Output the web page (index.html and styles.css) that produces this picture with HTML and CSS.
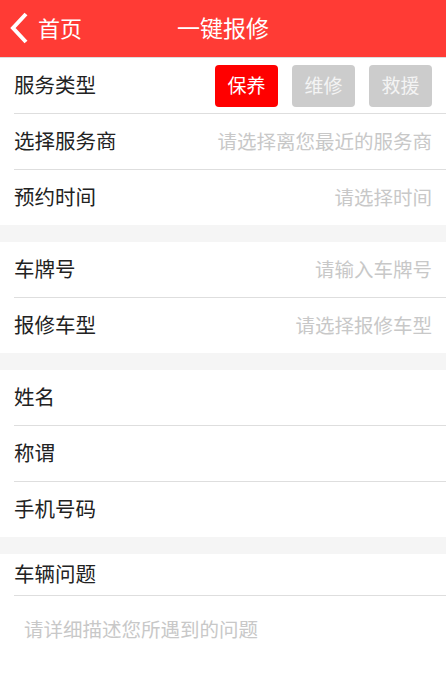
FILE: index.html
```html
<!DOCTYPE html>
<html lang="zh-CN">
<head>
<meta charset="utf-8">
<title>一键报修</title>
<link rel="stylesheet" href="styles.css">
</head>
<body>
<header class="topbar">
  <a class="back" href="#">
    <svg class="chev" width="20" height="32" viewBox="0 0 20 32"><polyline points="16,2 3,16 16,30" fill="none" stroke="#fff" stroke-width="4" stroke-linejoin="miter"/></svg>
    <span class="back-text">首页</span>
  </a>
  <h1 class="title">一键报修</h1>
</header>

<section class="group">
  <div class="row">
    <span class="label">服务类型</span>
    <div class="types">
      <button class="type active">保养</button>
      <button class="type">维修</button>
      <button class="type">救援</button>
    </div>
  </div>
  <div class="row">
    <span class="label">选择服务商</span>
    <span class="ph">请选择离您最近的服务商</span>
  </div>
  <div class="row">
    <span class="label">预约时间</span>
    <span class="ph">请选择时间</span>
  </div>
</section>

<section class="group">
  <div class="row">
    <span class="label">车牌号</span>
    <span class="ph">请输入车牌号</span>
  </div>
  <div class="row">
    <span class="label">报修车型</span>
    <span class="ph">请选择报修车型</span>
  </div>
</section>

<section class="group">
  <div class="row"><span class="label">姓名</span></div>
  <div class="row"><span class="label">称谓</span></div>
  <div class="row"><span class="label">手机号码</span></div>
</section>

<section class="group last">
  <div class="row short"><span class="label">车辆问题</span></div>
  <div class="desc">请详细描述您所遇到的问题</div>
</section>
</body>
</html>
```

FILE: styles.css
```css
* { box-sizing: border-box; }
html, body {
  margin: 0;
  padding: 0;
  background: #f5f5f5;
  font-family: "Noto Sans CJK SC", "Noto Sans", sans-serif;
  color: #222;
}
.topbar {
  position: relative;
  height: 58px;
  background: #ff3b35;
  border-bottom: 1px solid #dcdcdc;
  display: flex;
  align-items: center;
  justify-content: center;
}
.back {
  position: absolute;
  left: 10px;
  top: 0;
  height: 57px;
  display: flex;
  align-items: center;
  gap: 8px;
  color: #fff;
  text-decoration: none;
}
.chev { display: block; margin-top: -2px; }
.back-text {
  font-size: 22px;
  line-height: 1;
  margin-top: -3px;
}
.title {
  margin: -3px 0 0 0;
  font-size: 23px;
  font-weight: normal;
  color: #fff;
  line-height: 1;
}
.group {
  background: #fff;
  padding-left: 14px;
  margin-bottom: 17px;
}
.group.last { margin-bottom: 0; min-height: 131px; }
.row {
  height: 56px;
  border-bottom: 1px solid #dedede;
  display: flex;
  align-items: center;
  justify-content: space-between;
  padding-right: 14px;
}
.row:last-child { border-bottom: none; height: 55px; }
.row.short { height: 42px; border-bottom: 1px solid #dedede; }
.label {
  font-size: 20.5px;
  line-height: 1;
  margin-top: -2px;
}
.ph {
  font-size: 19.5px;
  line-height: 1;
  color: #c8c8c8;
  margin-top: -2px;
}
.types {
  display: flex;
  gap: 14px;
}
.type {
  width: 63px;
  height: 42px;
  border: none;
  border-radius: 4px;
  background: #cccccc;
  color: #f4f4f4;
  font-family: inherit;
  font-size: 19px;
  line-height: 1;
  padding: 0 0 3px 0;
}
.type.active {
  background: #ff0000;
  color: #fff;
}
.desc {
  padding: 23px 0 0 10px;
  font-size: 19.5px;
  line-height: 1;
  color: #c8c8c8;
  height: 90px;
}
```
